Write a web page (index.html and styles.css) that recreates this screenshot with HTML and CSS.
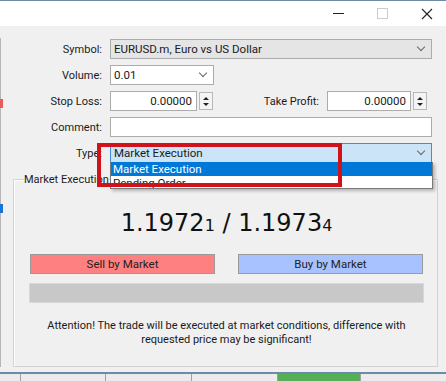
FILE: index.html
```html
<!DOCTYPE html>
<html lang="en">
<head>
    <meta charset="UTF-8">
    <title>Order</title>
    <link rel="stylesheet" href="styles.css">
</head>
<body>
    <div class="titlebar">
        <span class="tb-min"></span>
        <span class="tb-max"></span>
        <svg class="tb-close" width="12" height="12" viewBox="0 0 12 12"><path d="M1 1L11 11M11 1L1 11" stroke="#222" stroke-width="1.1"/></svg>
    </div>

    <div class="main">
        <div class="peek">
            <span class="mark red"></span>
            <span class="mark blue"></span>
        </div>

        <div class="dialog">
            <div class="form">
                <label>Symbol:</label>
                <div class="select gray wide">EURUSD.m, Euro vs US Dollar <span class="chev"></span></div>

                <label>Volume:</label>
                <div class="row">
                    <div class="select vol">0.01 <span class="chev"></span></div>
                </div>

                <label>Stop Loss:</label>
                <div class="row">
                    <div class="num">0.00000</div>
                    <div class="spin"><i class="up"></i><i class="down"></i></div>
                    <label class="tp">Take Profit:</label>
                    <div class="num tpnum">0.00000</div>
                    <div class="spin"><i class="up"></i><i class="down"></i></div>
                </div>

                <label>Comment:</label>
                <div class="text wide"></div>

                <label>Type:</label>
                <div class="type-wrap">
                    <div class="select active wide">Market Execution <span class="chev"></span></div>
                    <ul class="list">
                        <li class="sel">Market Execution</li>
                        <li>Pending Order</li>
                    </ul>
                    <div class="callout"></div>
                </div>
            </div>

            <fieldset class="group">
                <legend>Market Execution</legend>
                <div class="price">1.1972<small>1</small> / 1.1973<small>4</small></div>
                <div class="buttons">
                    <button class="sell">Sell by Market</button>
                    <button class="buy">Buy by Market</button>
                </div>
                <div class="progress"></div>
                <p class="note">Attention! The trade will be executed at market conditions, difference with requested price may be significant!</p>
            </fieldset>
        </div>
    </div>

    <div class="tabs">
        <span class="tab"></span>
        <span class="tab"></span>
        <span class="tab"></span>
        <span class="tab"></span>
        <span class="tab green"></span>
        <span class="tab"></span>
    </div>
</body>
</html>
```

FILE: styles.css
```css
body {
    margin: 0;
    width: 446px;
    height: 381px;
    overflow: hidden;
    background: #f0f0f0;
    font-family: Roboto, sans-serif;
    font-size: 11px;
    color: #1a1a1a;
}
.titlebar {
    height: 25px;
    background: #fff;
    border-top: 1px solid #6b8ca6;
    display: flex;
    align-items: center;
    justify-content: flex-end;
    gap: 33px;
    padding-right: 13px;
}
.tb-min {
    width: 11px;
    border-top: 1px solid #222;
}
.tb-max {
    width: 9px;
    height: 9px;
    border: 1px solid #ccc;
}
.main {
    display: flex;
    height: 346px;
}
.peek {
    width: 3px;
    margin-top: 12px;
    height: 328px;
    background: #fff;
    border-right: 1px solid #b5b5b5;
    border-top: 1px solid #b5b5b5;
    position: relative;
}
.mark {
    position: absolute;
    left: 0;
    width: 3px;
    height: 9px;
}
.mark.red { top: 60px; background: #e85c5c; }
.mark.blue { top: 165px; background: #1a73d8; }
.dialog {
    flex: 1;
    padding: 13px 13px 0 8px;
}
.form {
    display: grid;
    grid-template-columns: 93px 322px;
    column-gap: 8px;
    row-gap: 6px;
    grid-auto-rows: 20px;
    align-items: center;
}
.form > label {
    text-align: right;
}
.row {
    display: flex;
    align-items: center;
    height: 20px;
}
.select, .num, .text {
    box-sizing: border-box;
    height: 20px;
    border: 1px solid #acacac;
    background: #fff;
    padding: 0 3px;
    line-height: 18px;
    position: relative;
    font-size: 11.5px;
}
.wide { width: 322px; }
.select.gray { background: #e5e5e5; }
.select.vol { width: 104px; }
.select.active {
    background: #cce4f7;
    border-color: #3d8ee0;
}
.chev {
    position: absolute;
    right: 7px;
    top: 4px;
    width: 5px;
    height: 5px;
    border-right: 1px solid #666;
    border-bottom: 1px solid #666;
    transform: rotate(45deg);
}
.num {
    width: 87px;
    text-align: right;
    padding-right: 4px;
}
.tpnum { width: 84px; }
.spin {
    box-sizing: border-box;
    width: 14px;
    height: 18px;
    margin-left: 2px;
    border: 1px solid #b8b8b8;
    background: #f4f4f4;
    display: flex;
    flex-direction: column;
    align-items: center;
    justify-content: center;
    gap: 3px;
}
.spin i {
    width: 0;
    height: 0;
    border-left: 3px solid transparent;
    border-right: 3px solid transparent;
}
.spin .up { border-bottom: 3px solid #222; }
.spin .down { border-top: 3px solid #222; }
.tp {
    width: 106px;
    text-align: right;
    margin-right: 8px;
}
.type-wrap {
    position: relative;
    height: 20px;
}
.list {
    position: absolute;
    left: 0;
    top: 19px;
    width: 323px;
    height: 27px;
    margin: 0;
    padding: 0;
    list-style: none;
    background: #fff;
    border: 1px solid #7a7a7a;
    border-top: none;
    box-sizing: border-box;
    box-shadow: 2px 2px 3px rgba(0, 0, 0, 0.25);
    overflow: hidden;
    z-index: 2;
    font-size: 11.5px;
}
.list li {
    height: 14px;
    line-height: 14px;
    padding-left: 2px;
}
.list li.sel {
    background: #0078d7;
    color: #fff;
}
.callout {
    position: absolute;
    left: -13px;
    top: 0;
    width: 237px;
    height: 36px;
    border: 4px solid #d0121b;
    z-index: 3;
}
.group {
    margin: 10px 0 0 4px;
    width: 425px;
    box-sizing: border-box;
    height: 194px;
    border: 1px solid #d3d3d3;
    box-shadow: inset 1px 1px #fff;
    padding: 21px 13px 0 15px;
}
.group legend {
    padding: 0;
    margin-left: -5px;
}
.price {
    text-align: center;
    font-family: "DejaVu Sans", sans-serif;
    font-size: 24px;
    color: #111;
    height: 47px;
    line-height: 32px;
}
.price small {
    font-size: 16px;
}
.buttons {
    display: flex;
    justify-content: space-between;
    padding: 0 1px;
}
.buttons button {
    width: 185px;
    height: 20px;
    border: 1px solid #9a9a9a;
    font-family: Roboto, sans-serif;
    font-size: 11.5px;
    color: #222;
    padding: 0;
}
.sell { background: #ff8080; }
.buy { background: #a8c2ff; }
.progress {
    margin-top: 9px;
    height: 20px;
    background: #c8c8c8;
    border: 1px solid #d8d8d8;
    box-sizing: border-box;
}
.note {
    margin: 16px 0 0;
    text-align: center;
    line-height: 14px;
    padding: 0 6px;
}
.tabs {
    height: 8px;
    border-top: 2px solid #6b8ca6;
    background: #ececec;
    display: flex;
}
.tab {
    width: 100px;
    border-left: 1px solid #a0a0a0;
}
.tab:first-child { width: 23px; border-left: none; }
.tab.green { background: #55b055; width: 97px; }
```
